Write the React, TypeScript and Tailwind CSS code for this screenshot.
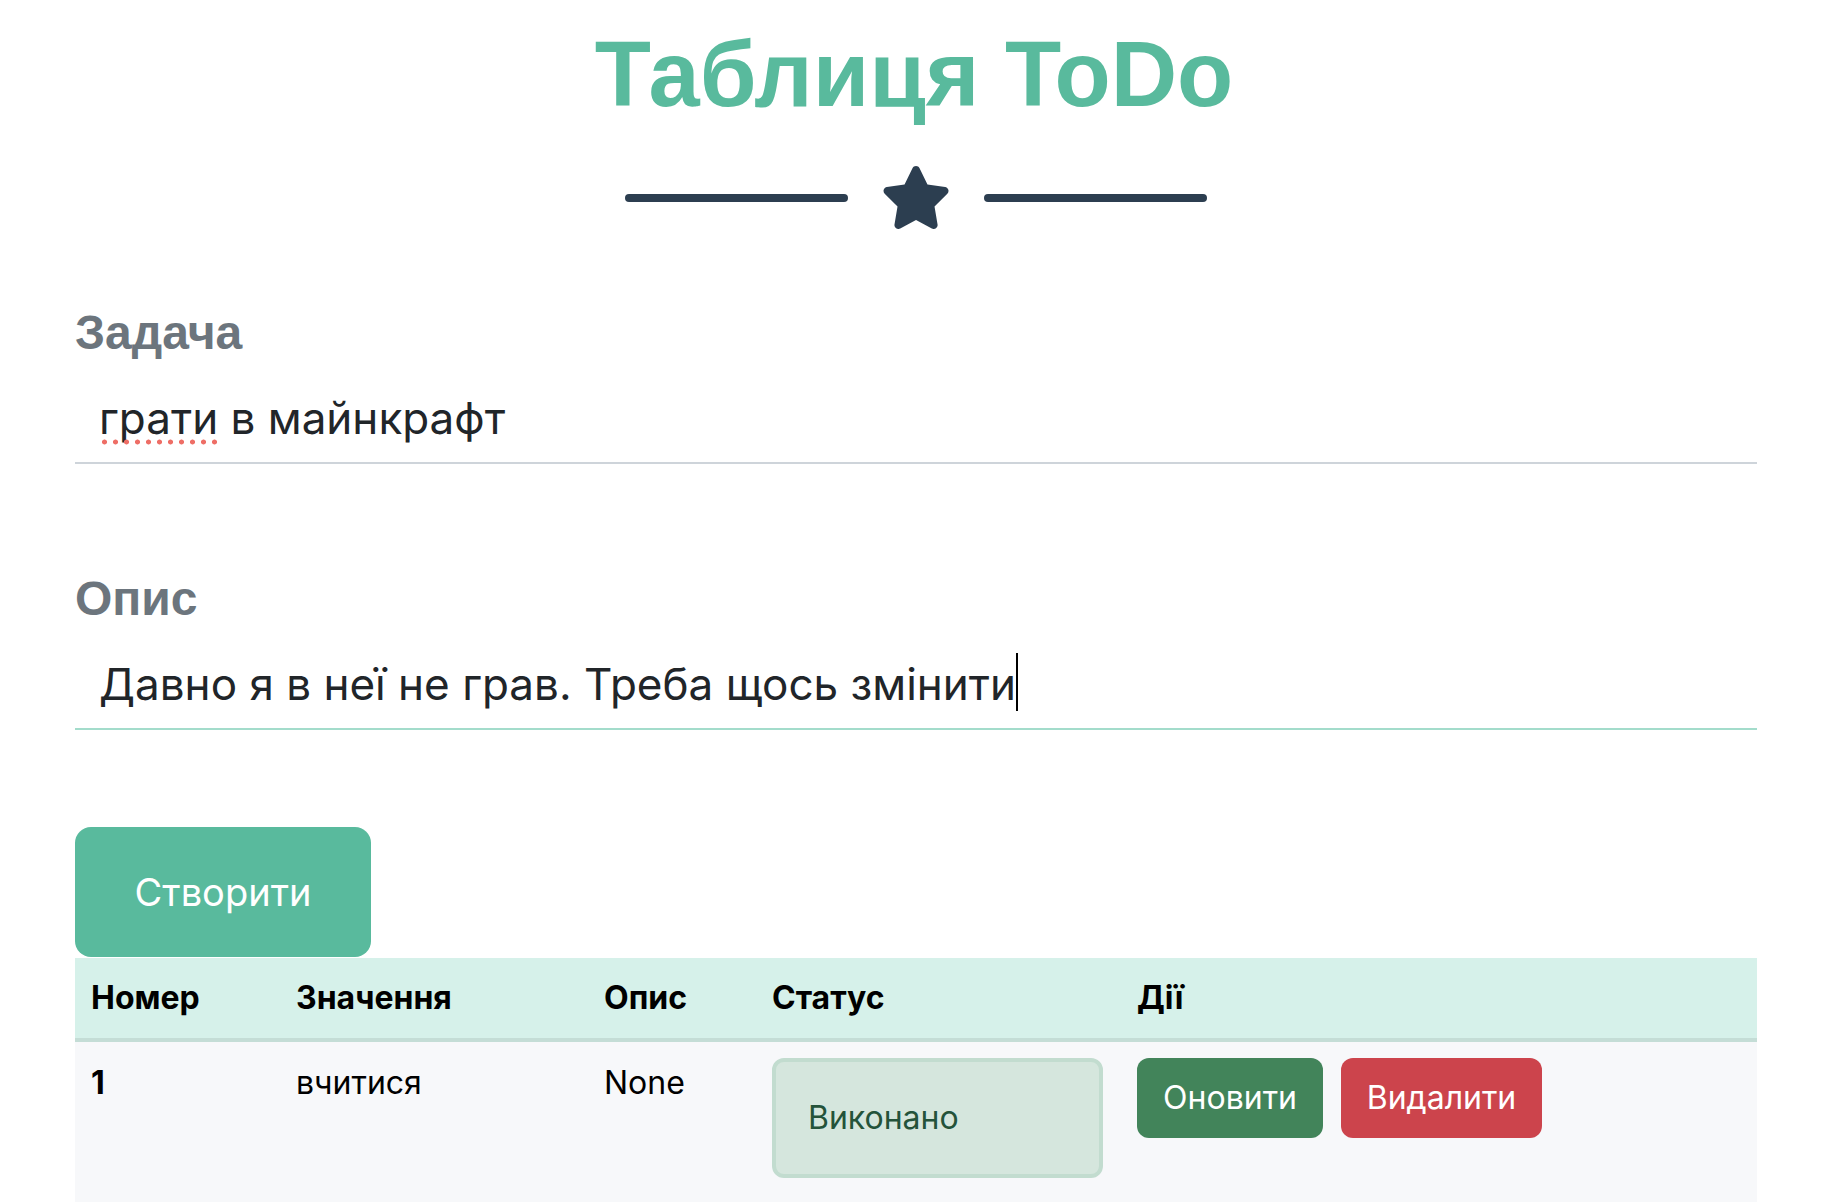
import React from 'react';

const Star = () => (
  <svg viewBox="24 0 528 512" className="h-[63px] w-[66px]" fill="#2c3e50">
    <path d="M316.9 18C311.6 7 300.4 0 288.1 0s-23.4 7-28.8 18L195 150.3 51.4 171.5c-12 1.8-22 10.2-25.7 21.7s-.7 24.2 7.9 32.7L137.8 329 113.2 474.7c-2 12 3 24.2 12.9 31.3s23 8 33.8 2.3l128.3-68.5 128.3 68.5c10.8 5.7 23.9 4.9 33.8-2.3s14.9-19.3 12.9-31.3L438.5 329 542.7 225.9c8.6-8.5 11.7-21.2 7.9-32.7s-13.7-19.9-25.7-21.7L381.2 150.3 316.9 18z" />
  </svg>
);

const rows = [{ id: 1, value: 'вчитися', desc: 'None', status: 'Виконано' }];

export default function App() {
  return (
    <div className="min-h-[1202px] w-full bg-white pt-[19px] font-['Inter',sans-serif] text-[#212529]">
      <h1 className="text-center font-['Liberation_Sans',Arial,sans-serif] text-[92px] font-bold leading-[110px] text-[#59ba9d]">
        Таблиця ToDo
      </h1>

      <div className="ml-[75px] w-[1682px]">
        <div className="mt-[37px] flex h-[63px] items-center justify-center gap-[35px]">
          <div className="h-[8px] w-[223px] rounded-full bg-[#2c3e50]" />
          <Star />
          <div className="h-[8px] w-[223px] rounded-full bg-[#2c3e50]" />
        </div>

        <div className="mt-[75px]">
          <div className="font-['Liberation_Sans',Arial,sans-serif] text-[48px] font-bold leading-[58px] text-[#6c757d]">
            Задача
          </div>
          <div className="border-b-2 border-[#ced4da] px-6 pt-[23px] pb-[11px] text-[44px] leading-[66px]">
            <span className="relative">
              грати
              {/* spellcheck squiggle */}
              <span className="absolute bottom-0 left-0 right-0 h-[6px] bg-[radial-gradient(circle,#ee6e66_2.2px,transparent_2.8px)] bg-[length:11px_6px] bg-repeat-x" />
            </span>{' '}
            в майнкрафт
          </div>
        </div>

        <div className="mt-[106px]">
          <div className="font-['Liberation_Sans',Arial,sans-serif] text-[48px] font-bold leading-[58px] text-[#6c757d]">
            Опис
          </div>
          <div className="border-b-2 border-[#a3dccb] px-6 pt-[23px] pb-[11px] text-[44px] leading-[66px]">
            Давно я в неї не грав. Треба щось змінити
            <span className="inline-block h-[58px] w-[2px] bg-black align-[-11px]" />
          </div>
        </div>

        <button className="mt-[97px] flex h-[130px] w-[296px] items-center justify-center rounded-[16px] bg-[#59ba9d] text-[38px] text-white">
          Створити
        </button>

        <div className="mt-px text-[32px] leading-[48px]">
          <div className="grid grid-cols-[205px_308px_168px_365px_1fr] border-b-4 border-[#c4ddd6] bg-[#d6f1ea] font-bold text-black">
            <div className="p-4">Номер</div>
            <div className="p-4">Значення</div>
            <div className="p-4">Опис</div>
            <div className="p-4">Статус</div>
            <div className="p-4">Дії</div>
          </div>
          {rows.map((r) => (
            <div key={r.id} className="grid min-h-[170px] grid-cols-[205px_308px_168px_365px_1fr] bg-[#f7f8fa] text-black">
              <div className="p-4 pt-[17px] font-bold">{r.id}</div>
              <div className="p-4 pt-[17px]">{r.value}</div>
              <div className="p-4 pt-[17px]">{r.desc}</div>
              <div className="p-4">
                <div className="w-[331px] rounded-[12px] border-4 border-[#c2dccf] bg-[#d5e6dd] p-8 text-[#24533a]">
                  {r.status}
                </div>
              </div>
              <div className="flex items-start gap-[18px] p-4">
                <button className="h-[80px] w-[186px] rounded-[12px] bg-[#42845a] text-white">Оновити</button>
                <button className="h-[80px] w-[201px] rounded-[12px] bg-[#cc444c] text-white">Видалити</button>
              </div>
            </div>
          ))}
        </div>
      </div>
    </div>
  );
}
